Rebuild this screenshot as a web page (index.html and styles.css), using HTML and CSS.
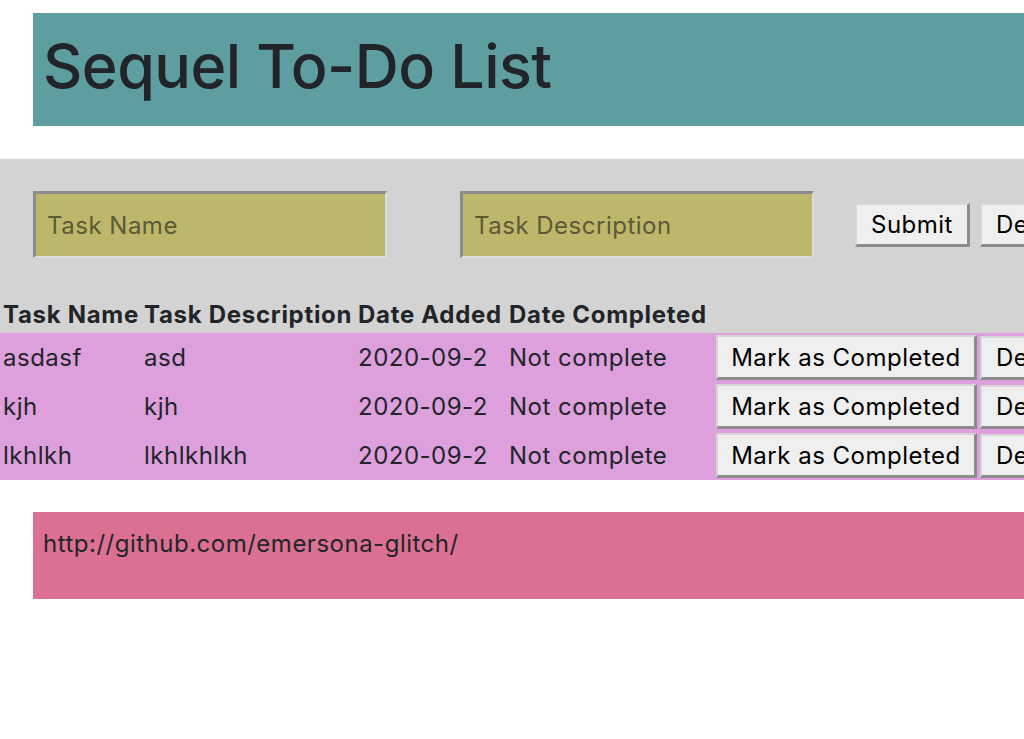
FILE: index.html
```html
<!DOCTYPE html>
<html lang="en">
<head>
<meta charset="utf-8">
<title>Sequel To-Do List</title>
<link rel="stylesheet" href="styles.css">
</head>
<body>
<header class="banner">
  <h1 class="title">Sequel To-Do List</h1>
</header>
<section class="board">
  <form class="entry">
    <input class="field field-name" type="text" placeholder="Task Name">
    <input class="field field-desc" type="text" placeholder="Task Description">
    <button class="btn btn-submit" type="button">Submit</button>
    <button class="btn" type="button">Delete All</button>
  </form>
  <table class="tasks">
    <colgroup>
      <col class="c-name">
      <col class="c-desc">
      <col class="c-added">
      <col class="c-done">
      <col class="c-mark">
      <col class="c-del">
    </colgroup>
    <thead>
      <tr>
        <th>Task Name</th>
        <th>Task Description</th>
        <th>Date Added</th>
        <th>Date Completed</th>
        <th></th>
        <th></th>
      </tr>
    </thead>
    <tbody>
      <tr>
        <td>asdasf</td><td>asd</td><td>2020-09-2</td><td>Not complete</td>
        <td><button class="btn btn-mark" type="button">Mark as Completed</button></td>
        <td><button class="btn" type="button">Delete</button></td>
      </tr>
      <tr>
        <td>kjh</td><td>kjh</td><td>2020-09-2</td><td>Not complete</td>
        <td><button class="btn btn-mark" type="button">Mark as Completed</button></td>
        <td><button class="btn" type="button">Delete</button></td>
      </tr>
      <tr>
        <td>lkhlkh</td><td>lkhlkhlkh</td><td>2020-09-2</td><td>Not complete</td>
        <td><button class="btn btn-mark" type="button">Mark as Completed</button></td>
        <td><button class="btn" type="button">Delete</button></td>
      </tr>
    </tbody>
  </table>
</section>
<footer class="foot">
  <p class="link">http://github.com/emersona-glitch/</p>
</footer>
</body>
</html>
```

FILE: styles.css
```css
html, body {
  margin: 0;
  padding: 0;
}
body {
  overflow-x: hidden;
  font-family: Inter, "Liberation Sans", sans-serif;
  font-size: 24px;
  line-height: 36px;
  letter-spacing: 0.5px;
  color: #212529;
  background: #fff;
}
.banner {
  margin: 13px 0 0 33px;
  padding: 17px 0 0 10px;
  background: #5f9ea0;
}
.title {
  margin: 0;
  padding-bottom: 24px;
  font-size: 61px;
  line-height: 72px;
  font-weight: 500;
  letter-spacing: -0.55px;
}
.board {
  margin-top: 33px;
  padding-top: 32px;
  background: #d3d3d3;
}
.entry {
  display: flex;
  align-items: center;
  margin: 0 0 39px 33px;
  white-space: nowrap;
}
.field {
  box-sizing: border-box;
  width: 354px;
  height: 67px;
  padding: 0 0 0 11px;
  font: inherit;
  letter-spacing: 0.5px;
  color: #212529;
  background: #bdb76b;
  border-style: solid;
  border-width: 3px 2px 2px 3px;
  border-color: #8c8c8c #dcdcdc #dcdcdc #8c8c8c;
  outline: none;
}
.field::placeholder {
  color: #5c5a36;
  opacity: 1;
}
.field-name {
  margin-right: 73px;
}
.field-desc {
  margin-right: 41px;
}
.btn {
  box-sizing: border-box;
  height: 44px;
  padding: 0 14px;
  font-family: Inter, "Liberation Sans", sans-serif;
  font-size: 24px;
  letter-spacing: 0.5px;
  color: #000;
  background: #efefef;
  border-style: solid;
  border-width: 2px 3px 3px 2px;
  border-color: #d6d6d6 #8c8c8c #8c8c8c #d6d6d6;
  border-radius: 0;
  white-space: nowrap;
  flex-shrink: 0;
}
.btn-submit {
  width: 115px;
  margin-right: 10px;
}
.btn-mark {
  width: 261px;
  height: 45px;
  padding: 0 10px;
  text-align: center;
}
.tasks {
  table-layout: fixed;
  width: 1127px;
  border-collapse: collapse;
  border-spacing: 0;
  white-space: nowrap;
}
.tasks th {
  text-align: left;
  font-weight: 700;
  letter-spacing: 0.7px;
  padding: 0 0 0 3px;
  line-height: 36px;
  height: 36px;
  overflow: visible;
}
.tasks td {
  padding: 2px 0 2px 3px;
  vertical-align: middle;
  line-height: 36px;
}
.tasks tbody tr {
  background: #dda0dd;
}
.c-name { width: 141px; }
.c-desc { width: 214px; }
.c-added { width: 151px; }
.c-done { width: 207px; }
.c-mark { width: 264px; }
.c-del { width: 150px; }
.foot {
  margin: 32px 0 140px 33px;
  padding: 14px 0 13px 10px;
  background: #db7093;
}
.link {
  margin: 0 0 24px;
}
```
